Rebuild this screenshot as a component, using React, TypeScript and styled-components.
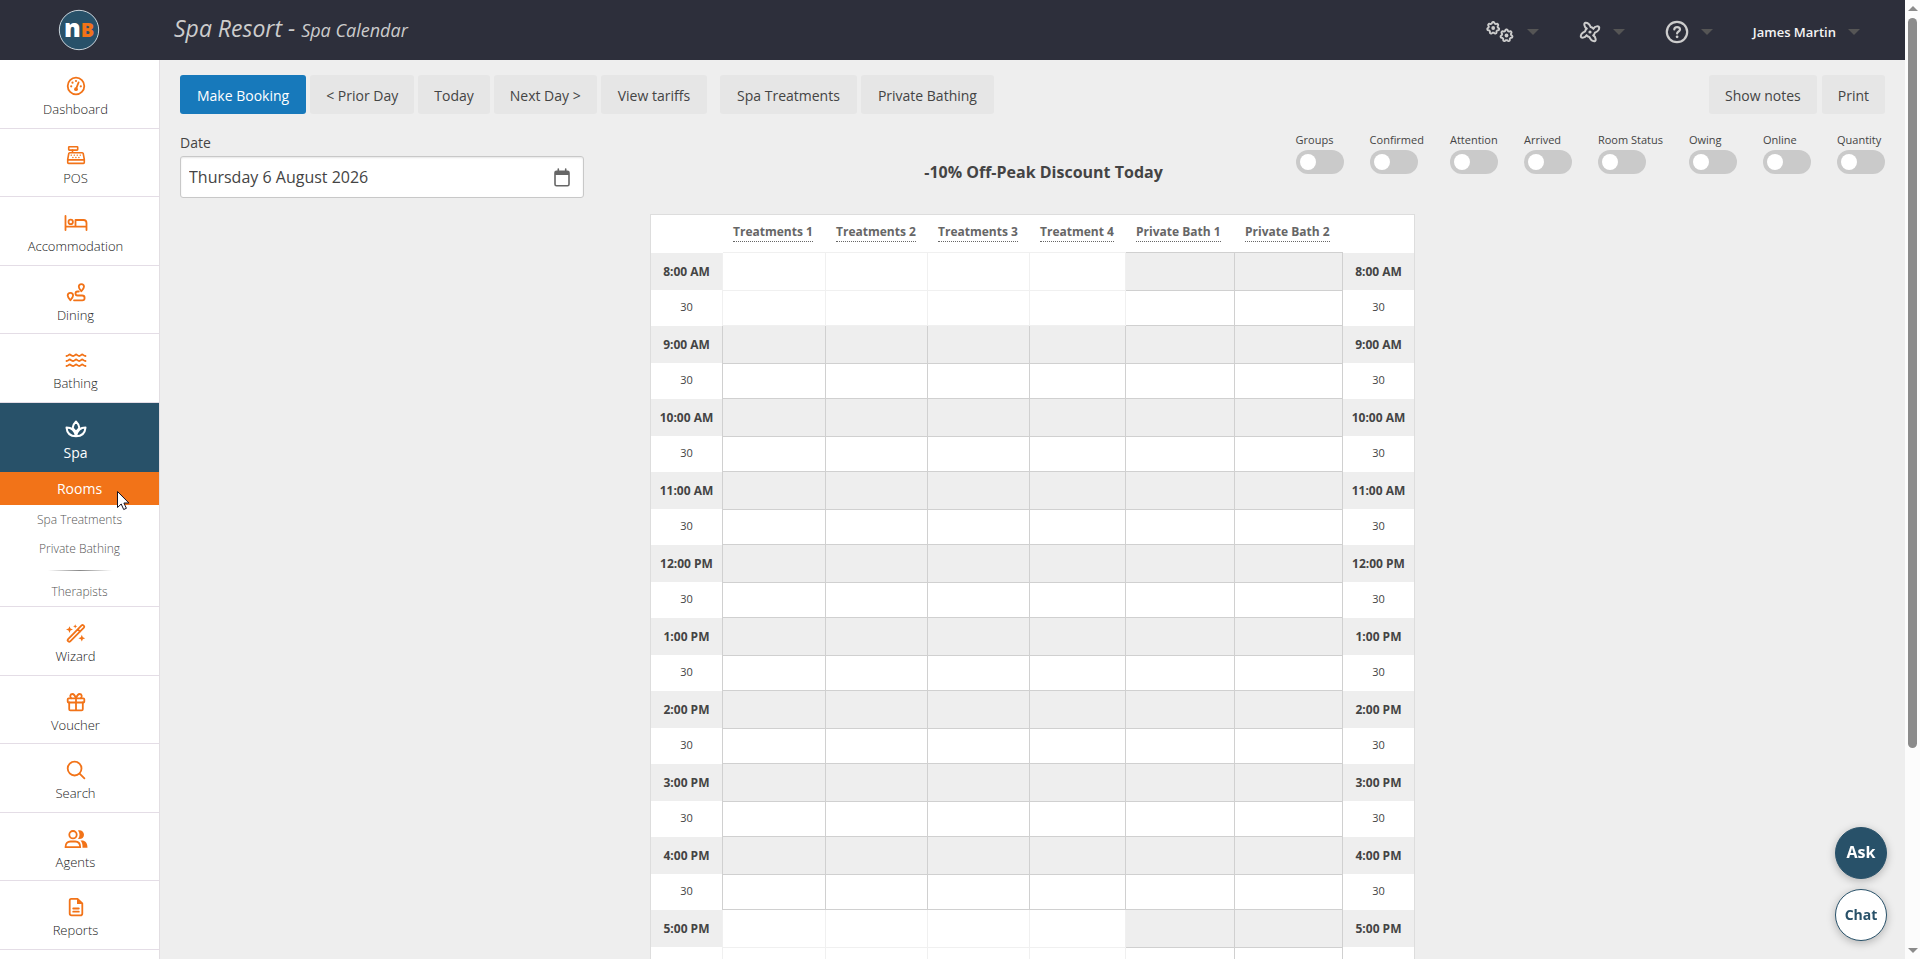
import React from "react";
import styled, { createGlobalStyle, css } from "styled-components";

const GlobalStyle = createGlobalStyle`
  * { box-sizing: border-box; }
  body {
    margin: 0;
    background: #eeeeee;
    color: #444444;
    font-family: "Open Sans", "Liberation Sans", sans-serif;
    font-size: 14px;
  }
  button, input { font-family: inherit; }
  a { color: inherit; text-decoration: none; }
`;

const Page = styled.div`
  display: grid;
  grid-template-columns: minmax(0, 1fr) 15px;
  height: 100vh;
  overflow: hidden;
`;

const Shell = styled.div`
  display: flex;
  flex-direction: column;
  min-height: 0;
`;

/* ---------- top bar ---------- */

const TopBar = styled.header`
  display: flex;
  align-items: center;
  flex: none;
  height: 60px;
  padding-right: 45px;
  background: #2d2f3b;
  color: #cccccc;
`;

const LogoLink = styled.a`
  display: flex;
  justify-content: center;
  width: 157px;
`;

const Title = styled.h1`
  flex: 1;
  margin: 0 0 3px 17px;
  font-size: 23px;
  line-height: 28px;
  font-weight: 400;
  font-style: italic;

  small {
    font-size: 18px;
  }
`;

const TopMenu = styled.div`
  display: flex;
  align-items: center;
`;

const MenuButton = styled.button`
  display: flex;
  align-items: center;
  gap: 12px;
  padding: 4px 0 0;
  border: 0;
  background: none;
  color: #f4f4f4;
  font-size: 13px;
  line-height: 20px;
  font-weight: 600;

  & + & {
    margin-left: 40px;
  }

  svg {
    color: #cccccc;
  }
`;

const Caret = styled.span`
  border: 6px solid transparent;
  border-top-color: #555555;
  border-bottom: 0;
`;

/* ---------- side navigation ---------- */

const Body = styled.div`
  display: flex;
  flex: 1;
  min-height: 0;
`;

const Side = styled.nav`
  flex: none;
  width: 160px;
  overflow: hidden;
  background: #ffffff;
  border-right: 1px solid #e2dee2;
`;

const NavList = styled.ul`
  margin: 0;
  padding: 0;
  list-style: none;
`;

const NavItem = styled.li`
  border-bottom: 1px solid #e4dde6;
`;

const NavLink = styled.a<{ $active?: boolean }>`
  display: flex;
  flex-direction: column;
  align-items: center;
  gap: 2px;
  padding: 15px 8px 8px 0;
  color: #222222;
  font-size: 13px;
  line-height: 20px;
  font-weight: 300;

  ${NavItem}:nth-child(odd) & {
    padding-bottom: 9px;
  }

  svg {
    color: #f27318;
  }

  ${(p) =>
    p.$active &&
    css`
      gap: 3px;
      padding-bottom: 9px;
      background: #285169;
      color: #ffffff;
      font-size: 14px;
      font-weight: 400;

      svg {
        color: #ffffff;
      }
    `}
`;

const SubMenu = styled.div`
  text-align: center;
  font-size: 12px;
  line-height: 29px;
  font-weight: 300;
  color: #555555;
`;

const SubLink = styled.a`
  display: block;
`;

const SubCurrent = styled(SubLink)`
  position: relative;
  background: #f27318;
  color: #ffffff;
  font-size: 14px;
  line-height: 33px;
  font-weight: 400;
`;

const Pointer = styled.svg`
  position: absolute;
  left: 116px;
  top: 18px;
`;

const SubRule = styled.hr`
  width: 64px;
  height: 1px;
  margin: 7px auto 6px;
  border: 0;
  background: linear-gradient(90deg, transparent, #888888, transparent);
`;

/* ---------- content ---------- */

const Main = styled.main`
  flex: 1;
  min-width: 0;
  padding: 15px 20px 0;
`;

const Toolbar = styled.div`
  display: flex;
  justify-content: space-between;
`;

const ButtonGroup = styled.div<{ $gap: number }>`
  display: flex;
  gap: ${(p) => p.$gap}px;
`;

const Button = styled.button<{ $primary?: boolean; $wide?: boolean }>`
  height: 39px;
  padding: 2px ${(p) => (p.$wide ? 17 : 16)}px 0;
  border: 0;
  border-radius: 3px;
  background: ${(p) => (p.$primary ? "#1779bb" : "#e6e6e6")};
  color: ${(p) => (p.$primary ? "#ffffff" : "#444444")};
  font-size: 14px;
  font-weight: ${(p) => (p.$primary ? 500 : 400)};
  white-space: nowrap;
`;

const Filters = styled.div`
  display: grid;
  grid-template-columns: 1fr auto 1fr;
  align-items: start;
  margin: 19px 0 16px;
`;

const DateField = styled.div`
  display: flex;
  flex-direction: column;
  gap: 3px;
  max-width: 404px;
  line-height: 20px;
`;

const DateBox = styled.div`
  display: flex;
  align-items: center;
  height: 42px;
  padding: 0 13px 0 8px;
  border: 1px solid #c8c8c8;
  border-radius: 3px;
  background: #ffffff;
  box-shadow: inset 0 1px 2px rgba(0, 0, 0, 0.1);
`;

const DateInput = styled.input`
  flex: 1;
  min-width: 0;
  padding: 0;
  border: 0;
  outline: 0;
  background: none;
  color: #444444;
  font-size: 16px;
`;

const IconButton = styled.button`
  display: flex;
  padding: 0;
  border: 0;
  background: none;
  color: #666666;
`;

const Notice = styled.p`
  margin: 28px 0 0 22px;
  font-size: 16px;
  line-height: 22px;
  font-weight: 700;
`;

const Switches = styled.div`
  display: flex;
  justify-content: flex-end;
  gap: 26px;
`;

const SwitchLabel = styled.label`
  display: flex;
  flex-direction: column;
  gap: 3px;
  font-size: 11px;
  line-height: 14px;
`;

const SwitchInput = styled.input`
  appearance: none;
  width: 48px;
  height: 24px;
  margin: 0;
  padding: 4px;
  border-radius: 12px;
  background: #cacaca;

  &::before {
    content: "";
    display: block;
    width: 16px;
    height: 16px;
    border-radius: 50%;
    background: #ffffff;
  }

  &:checked {
    padding-left: 28px;
    background: #1779bb;
  }
`;

/* ---------- calendar ---------- */

const Calendar = styled.table`
  margin: 0 auto;
  border: 1px solid #dddddd;
  border-spacing: 0;
  table-layout: fixed;
  width: 765px;
  background: #ffffff;
`;

const lineColor = (closed?: boolean) => (closed ? "#f0f0f0" : "#d0d0d0");

const RoomHead = styled.th<{ $closed?: boolean }>`
  height: 38px;
  padding: 0 0 3px 10px;
  border-bottom: 1px solid ${(p) => lineColor(p.$closed)};
  text-align: left;
  font-size: 12px;
  line-height: 18px;
  font-weight: 700;
  color: #666666;

  a {
    display: inline-block;
    border-bottom: 1px dotted #666666;
    white-space: nowrap;
  }
`;

const CornerHead = styled.td`
  padding: 0;
`;

const Row = styled.tr<{ $hour: boolean }>`
  height: ${(p) => (p.$hour ? 37 : 36)}px;
  background: ${(p) => (p.$hour ? "#eeeeee" : "#ffffff")};
`;

const TimeHead = styled.th<{ $hour: boolean; $edge?: "open" | "closed" }>`
  padding: 0 0 ${(p) => (p.$hour ? 0 : 2)}px;
  border-right: ${(p) =>
    p.$edge ? `1px solid ${lineColor(p.$edge === "closed")}` : "0"};
  text-align: center;
  font-size: ${(p) => (p.$hour ? 12 : 11)}px;
  line-height: 16px;
  font-weight: ${(p) => (p.$hour ? 700 : 400)};
`;

const Slot = styled.td<{ $hour: boolean; $closed: boolean }>`
  padding: 0;
  border: 0 solid ${(p) => lineColor(p.$closed)};
  border-width: ${(p) => (p.$hour ? "0 1px 0 0" : "1px 1px 1px 0")};
  background: ${(p) => (p.$closed ? "#ffffff" : "transparent")};
`;

/* ---------- floating actions and scroll track ---------- */

const Floating = styled.div`
  position: fixed;
  right: 33px;
  bottom: 18px;
  display: flex;
  flex-direction: column;
  gap: 10px;
`;

const RoundButton = styled.button<{ $filled?: boolean }>`
  width: 52px;
  height: 52px;
  padding: 0 0 2px;
  border: 1px solid #285169;
  border-radius: 50%;
  background: ${(p) => (p.$filled ? "#285169" : "#ffffff")};
  color: ${(p) => (p.$filled ? "#ffffff" : "#285169")};
  box-shadow: 0 2px 8px rgba(0, 0, 0, 0.25);
  font-size: ${(p) => (p.$filled ? 16 : 14)}px;
  font-weight: 700;
`;

const Track = styled.div`
  display: flex;
  flex-direction: column;
  align-items: center;
  justify-content: space-between;
  gap: 6px;
  height: 100vh;
  padding: 6px 0;
  background: #fcfcfc;
`;

const ThumbLane = styled.div`
  flex: 1;
  padding-top: 1px;
`;

const Thumb = styled.div`
  width: 9px;
  height: 79%;
  border-radius: 5px;
  background: #8b8b8b;
`;

const Arrow = styled.span<{ $down?: boolean }>`
  border: 0 solid transparent;
  border-width: ${(p) => (p.$down ? "5px 5px 0" : "0 5px 5px")};
  ${(p) => (p.$down ? "border-top-color" : "border-bottom-color")}: #8b8b8b;
`;

/* ---------- drawings ---------- */

const Svg = ({
  w = 22,
  h = 22,
  sw = 1.8,
  children,
}: {
  w?: number;
  h?: number;
  sw?: number;
  children: React.ReactNode;
}) => (
  <svg
    width={w}
    height={h}
    viewBox={`0 0 ${w} ${h}`}
    fill="none"
    stroke="currentColor"
    strokeWidth={sw}
    strokeLinecap="round"
    strokeLinejoin="round"
    aria-hidden="true"
  >
    {children}
  </svg>
);

const solid = { fill: "currentColor", stroke: "none" };

const icons = {
  dashboard: (
    <Svg>
      <circle cx="11" cy="11" r="8.3" />
      <path d="M11 14 13.6 7.4" />
      <circle cx="11" cy="14.2" r="1.9" {...solid} />
      <g {...solid}>
        <circle cx="6.2" cy="11.3" r="1.1" />
        <circle cx="7.5" cy="7.7" r="1.1" />
        <circle cx="11" cy="6" r="1.1" />
        <circle cx="15.8" cy="11.3" r="1.1" />
      </g>
    </Svg>
  ),
  pos: (
    <Svg sw={1.6}>
      <rect x="3.7" y="2.7" width="9" height="3.4" rx="0.6" />
      <path d="M7.5 6v2.6M4.7 8.7h12.6q.8 0 .9.8l1.1 6v3q0 .9-.9.9H3.6q-.9 0-.9-.9v-3l1.1-6q.1-.8.9-.8zM3 15.9h16" />
      <path
        d="M6.2 11.2h.2M9.2 11.2h.2M12.2 11.2h.2M15.2 11.2h.2M7.8 13.5h.2M10.8 13.5h.2M13.8 13.5h.2"
        strokeWidth="1.3"
      />
    </Svg>
  ),
  bed: (
    <Svg w={24}>
      <path d="M1.5 4v14M1.5 14.6h21M22.5 18v-7q0-3-3-3h-8v6.4" />
      <circle cx="6.7" cy="9.9" r="2.2" />
    </Svg>
  ),
  dining: (
    <Svg>
      <path d="M16.3 10.3c-1.5-2-2.5-3.2-2.5-4.6a2.6 2.6 0 0 1 5.2 0c0 1.4-1.1 2.6-2.7 4.6z" />
      <path d="M5.4 19.3C3.8 17.3 2.7 16 2.7 14.5a2.7 2.7 0 0 1 5.4 0c0 1.5-1.1 2.8-2.7 4.800z" />
      <path d="M13.800 10.500h-1.300a2 2 0 0 0 0 4h4.700a2.400 2.400 0 0 1 0 4.800H9" />
    </Svg>
  ),
  waves: (
    <Svg>
      <path d="M1.500 7c1.800 0 2.200-1.500 3.200-1.500S6.800 7 8.200 7s2-1.500 2.900-1.500S12.800 7 14.200 7s2-1.500 3-1.500S18.800 7 20.500 7M1.500 12c1.800 0 2.200-1.500 3.200-1.500S6.800 12 8.200 12s2-1.500 2.900-1.500S12.800 12 14.200 12s2-1.500 3-1.500 1.600 1.500 3.300 1.500M1.500 17c1.800 0 2.200-1.500 3.200-1.500S6.800 17 8.200 17s2-1.500 2.900-1.500 1.700 1.500 3.100 1.500 2-1.500 3-1.500 1.600 1.500 3.300 1.500" />
    </Svg>
  ),
  spa: (
    <Svg sw={2}>
      <path d="M11 18.200c-5.500 0-9-3-9.500-8.600 4.800 0 8.200 2.600 9.500 8.600zM11 18.200c5.500 0 9-3 9.500-8.600-4.800 0-8.200 2.600-9.500 8.600z" />
      <path d="M7.600 10C8.100 7.300 9.500 5 11 3.600c1.500 1.400 2.900 3.700 3.400 6.400" />
      <path d="M7.800 10.200C9.500 11.500 10.500 13 11 15c.5-2 1.500-3.500 3.200-4.800" />
    </Svg>
  ),
  wizard: (
    <Svg>
      <path d="M2.900 17.300 16.600 3.400q.9-.8 1.800 0l.5.5q.8.9 0 1.800L5.200 19.400q-.9.8-1.800 0l-.5-.4q-.8-.9 0-1.700zM12.800 7.400l2.300 2.300" />
      <g {...solid}>
        <path d="M4.500 4.200l1 2.400 2.500 1-2.500 1-1 2.500-1-2.500-2.500-1 2.500-1zM10.200 2.200l.6 1.500 1.500.6-1.500.6-.6 1.500-.6-1.500-1.500-.6 1.500-.6zM16.800 12.800l1 2.400 2.400 1-2.400 1-1 2.400-1-2.400-2.400-1 2.400-1z" />
      </g>
    </Svg>
  ),
  gift: (
    <Svg>
      <rect x="2.7" y="7.3" width="16.6" height="4.2" rx="1" />
      <path d="M4.200 11.500v6.700q0 1.200 1.200 1.200h11.200q1.200 0 1.200-1.200v-6.700M11 7.300v12M11 7.200C10 4.500 9 3 7.500 3 5 3 4.700 5.800 6.200 7.200M11 7.200C12 4.500 13 3 14.500 3 17 3 17.300 5.800 15.800 7.200" />
    </Svg>
  ),
  search: (
    <Svg>
      <circle cx="9.6" cy="9.6" r="6.9" />
      <path d="m14.600 14.600 4.800 4.800" />
    </Svg>
  ),
  agents: (
    <Svg w={24}>
      <circle cx="9" cy="6.7" r="3.7" />
      <path d="M1.500 19.200c0-3.700 2-5.700 5-5.700h4.700c3 0 5 2 5 5.700z" />
      <path
        d="M14 2.400c3.400-.6 6 1.400 6 4.300s-2.600 4.900-6 4.300c2-2.400 2-6.200 0-8.600zM16.500 12.600h1.300c3.400 0 5.700 2.400 5.700 7.200h-5c.2-3-.3-5.400-2-7.200z"
        {...solid}
      />
    </Svg>
  ),
  reports: (
    <Svg>
      <path d="M6.200 2.800h6.300l4.800 4.700v9.900q0 1.900-1.900 1.900H6.600q-1.900 0-1.900-1.900V4.700q0-1.900 1.500-1.900zM8.200 12.500h5.600M8.200 15.700h5.600" />
      <path d="M12 2.300v5.600h5.600z" {...solid} />
    </Svg>
  ),
};

const Logo = () => (
  <svg width="42" height="42" viewBox="0 0 42 42" role="img" aria-label="nB">
    <circle cx="21" cy="21" r="19.7" fill="#285169" stroke="#c9d3da" />
    <text
      x="21"
      y="28"
      textAnchor="middle"
      fontFamily="Open Sans"
      fontWeight="800"
      fontSize="25"
      fill="#ffffff"
    >
      n
      <tspan fontSize="20" fill="#f27318">
        B
      </tspan>
    </text>
  </svg>
);

/* outline of a rounded cog with seven teeth, centred on the origin */
const cogPath = (() => {
  const teeth = 7;
  const steps = 84;
  const points = Array.from({ length: steps }, (_, i) => {
    const angle = (i / steps) * Math.PI * 2;
    const wave = Math.max(-0.7, Math.min(0.7, Math.cos(angle * teeth)));
    const radius = 5.3 + wave;
    return `${(radius * Math.sin(angle)).toFixed(2)} ${(-radius * Math.cos(angle)).toFixed(2)}`;
  });
  return `M${points.join("L")}Z`;
})();

const Gears = () => (
  <Svg w={30} h={24} sw={1.9}>
    <g transform="translate(8.2 8)">
      <path d={cogPath} />
      <circle r="1.9" {...solid} />
    </g>
    <g transform="translate(21.5 15.5)">
      <path d={cogPath} />
      <circle r="1.9" {...solid} />
    </g>
  </Svg>
);

const Pinwheel = () => (
  <Svg w={22} h={22} sw={2}>
    <g transform="translate(11 11)">
      {[0, 90, 180, 270].map((turn) => (
        <path
          key={turn}
          transform={`rotate(${turn})`}
          d="M-3.400-3.400C-6-5.200-6.300-8.700-4.600-9.200C-2.500-9.400-.4-7.500.7-4.900Q2-4.700 3.400-3.400"
        />
      ))}
      <circle r="1.600" {...solid} />
    </g>
  </Svg>
);

const Help = () => (
  <Svg w={24} h={24} sw={2.200}>
    <circle cx="12" cy="12" r="10.2" />
    <path d="M9.300 9.500c0-3.300 5.700-3.300 5.700 0 0 2-2.900 2-2.900 4" />
    <circle cx="12.1" cy="16.8" r="1.400" {...solid} />
  </Svg>
);

const CalendarIcon = () => (
  <Svg w={16} h={19} sw={1.6}>
    <rect x="1" y="3.300" width="14" height="14.500" rx="1.500" />
    <path d="M4.300 1v2M11.700 1v2" />
    <rect x="1" y="3" width="14" height="4" {...solid} />
  </Svg>
);

/* ---------- data ---------- */

const navBefore: [string, React.ReactNode][] = [
  ["Dashboard", icons.dashboard],
  ["POS", icons.pos],
  ["Accommodation", icons.bed],
  ["Dining", icons.dining],
  ["Bathing", icons.waves],
];

const navAfter: [string, React.ReactNode][] = [
  ["Wizard", icons.wizard],
  ["Voucher", icons.gift],
  ["Search", icons.search],
  ["Agents", icons.agents],
  ["Reports", icons.reports],
];

const rooms = [
  { name: "Treatments 1", width: 103, bath: false },
  { name: "Treatments 2", width: 102, bath: false },
  { name: "Treatments 3", width: 102, bath: false },
  { name: "Treatment 4", width: 96, bath: false },
  { name: "Private Bath 1", width: 109, bath: true },
  { name: "Private Bath 2", width: 108, bath: true },
];

const rows = Array.from({ length: 20 }, (_, i) => {
  const hour = 8 + Math.floor(i / 2);
  const isHour = i % 2 === 0;
  const label = `${((hour + 11) % 12) + 1}:00 ${hour < 12 ? "AM" : "PM"}`;
  return {
    key: i,
    isHour,
    label: isHour ? label : "30",
    closed: hour < 9 || hour >= 17,
  };
});

const switches = [
  "Groups",
  "Confirmed",
  "Attention",
  "Arrived",
  "Room Status",
  "Owing",
  "Online",
  "Quantity",
];

const NavEntry = ({ label, icon }: { label: string; icon: React.ReactNode }) => (
  <NavItem>
    <NavLink href="#">
      {icon}
      {label}
    </NavLink>
  </NavItem>
);

export default function App() {
  return (
    <Page>
      <GlobalStyle />
      <Shell>
        <TopBar>
          <LogoLink href="#">
            <Logo />
          </LogoLink>
          <Title>
            Spa Resort - <small>Spa Calendar</small>
          </Title>
          <TopMenu>
            <MenuButton aria-label="Settings">
              <Gears />
              <Caret />
            </MenuButton>
            <MenuButton aria-label="Activity">
              <Pinwheel />
              <Caret />
            </MenuButton>
            <MenuButton aria-label="Help">
              <Help />
              <Caret />
            </MenuButton>
            <MenuButton>
              James Martin
              <Caret />
            </MenuButton>
          </TopMenu>
        </TopBar>
        <Body>
          <Side>
            <NavList>
              {navBefore.map(([label, icon]) => (
                <NavEntry key={label} label={label} icon={icon} />
              ))}
              <NavItem>
                <NavLink href="#" $active>
                  {icons.spa}
                  Spa
                </NavLink>
                <SubMenu>
                  <SubCurrent href="#">
                    Rooms
                    <Pointer width="14" height="21" viewBox="0 0 14 21">
                      <path
                        d="M1.5 1.5v16l3.700-3.500 2.500 5.500 2.700-1.200-2.500-5.300h5z"
                        fill="#ffffff"
                        stroke="#111122"
                      />
                    </Pointer>
                  </SubCurrent>
                  <SubLink href="#">Spa Treatments</SubLink>
                  <SubLink href="#">Private Bathing</SubLink>
                  <SubRule />
                  <SubLink href="#">Therapists</SubLink>
                </SubMenu>
              </NavItem>
              {navAfter.map(([label, icon]) => (
                <NavEntry key={label} label={label} icon={icon} />
              ))}
            </NavList>
          </Side>
          <Main>
            <Toolbar>
              <ButtonGroup $gap={13}>
                <ButtonGroup $gap={4}>
                  <Button $primary $wide>
                    Make Booking
                  </Button>
                  <Button>&lt; Prior Day</Button>
                  <Button>Today</Button>
                  <Button>Next Day &gt;</Button>
                  <Button $wide>View tariffs</Button>
                </ButtonGroup>
                <ButtonGroup $gap={4}>
                  <Button $wide>Spa Treatments</Button>
                  <Button $wide>Private Bathing</Button>
                </ButtonGroup>
              </ButtonGroup>
              <ButtonGroup $gap={5}>
                <Button>Show notes</Button>
                <Button>Print</Button>
              </ButtonGroup>
            </Toolbar>
            <Filters>
              <DateField>
                <label htmlFor="date">Date</label>
                <DateBox>
                  <DateInput id="date" defaultValue="Thursday 6 August 2026" />
                  <IconButton aria-label="Open calendar">
                    <CalendarIcon />
                  </IconButton>
                </DateBox>
              </DateField>
              <Notice>-10% Off-Peak Discount Today</Notice>
              <Switches>
                {switches.map((name) => (
                  <SwitchLabel key={name}>
                    {name}
                    <SwitchInput type="checkbox" />
                  </SwitchLabel>
                ))}
              </Switches>
            </Filters>
            <Calendar>
              <colgroup>
                <col width={72} />
                {rooms.map((room) => (
                  <col key={room.name} width={room.width} />
                ))}
                <col width={71} />
              </colgroup>
              <thead>
                <tr>
                  <CornerHead />
                  {rooms.map((room) => (
                    <RoomHead key={room.name} $closed={!room.bath} scope="col">
                      <a href="#">{room.name}</a>
                    </RoomHead>
                  ))}
                  <CornerHead />
                </tr>
              </thead>
              <tbody>
                {rows.map((row) => (
                  <Row key={row.key} $hour={row.isHour}>
                    <TimeHead
                      scope="row"
                      $hour={row.isHour}
                      $edge={row.closed ? "closed" : "open"}
                    >
                      {row.label}
                    </TimeHead>
                    {rooms.map((room) => (
                      <Slot
                        key={room.name}
                        $hour={row.isHour}
                        $closed={row.closed && !room.bath}
                      />
                    ))}
                    <TimeHead scope="row" $hour={row.isHour}>
                      {row.label}
                    </TimeHead>
                  </Row>
                ))}
              </tbody>
            </Calendar>
          </Main>
        </Body>
      </Shell>
      <Track aria-hidden="true">
        <Arrow />
        <ThumbLane>
          <Thumb />
        </ThumbLane>
        <Arrow $down />
      </Track>
      <Floating>
        <RoundButton $filled>Ask</RoundButton>
        <RoundButton>Chat</RoundButton>
      </Floating>
    </Page>
  );
}
